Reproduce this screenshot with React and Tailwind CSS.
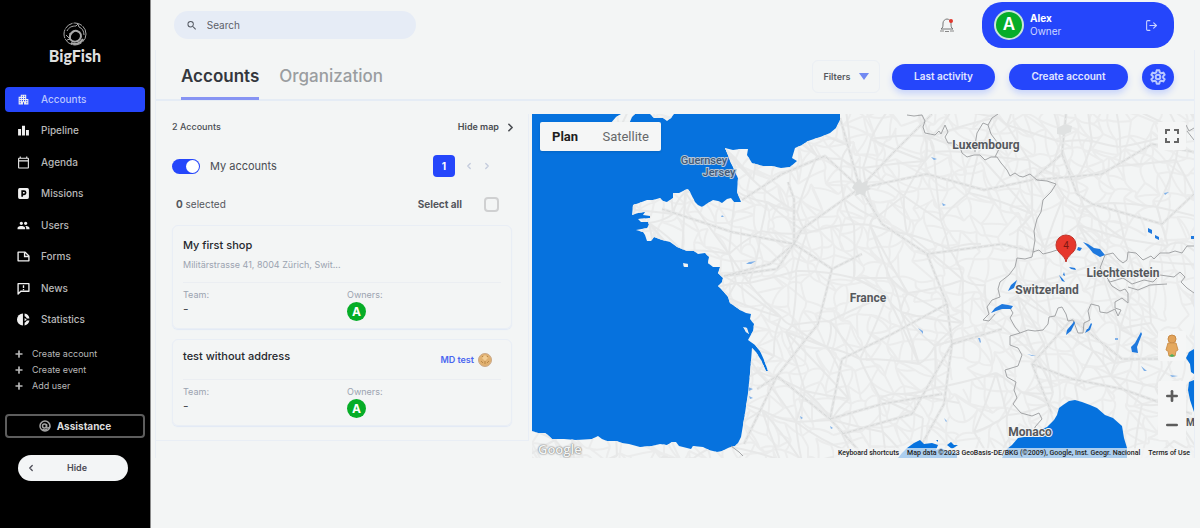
import {
  MdApartment,
  MdLeaderboard,
  MdOutlineCalendarToday,
  MdGroup,
  MdSearch,
  MdFullscreen,
} from "react-icons/md";
import { ChevronLeft, ChevronRight, LogOut, Plus, Minus } from "lucide-react";

const navItems = [
  { label: "Accounts", icon: MdApartment, active: true },
  { label: "Pipeline", icon: MdLeaderboard },
  { label: "Agenda", icon: MdOutlineCalendarToday },
  { label: "Missions", icon: MissionIcon },
  { label: "Users", icon: MdGroup },
  { label: "Forms", icon: FormIcon },
  { label: "News", icon: NewsIcon },
  { label: "Statistics", icon: StatsIcon },
];

const quickLinks = ["Create account", "Create event", "Add user"];

const accounts = [
  { name: "My first shop", address: "Militärstrasse 41, 8004 Zürich, Swit..." },
  { name: "test without address", tag: "MD test" },
];

const LAND =
  "M308 0 L308 6 304 14 298 19 291 22 276 27 270 31 263 34 260 44 265 47 258 53 249 54 240 52 231 52 220 49 215 41 216 35 208 35 201 36 193 34 196 41 198 47 201 53 206 64 205 78 209 88 202 88 199 84 195 85 190 89 186 87 181 86 176 89 170 93 166 91 163 88 158 78 156 75 153 76 147 79 141 79 141 84 138 86 135 88 131 87 128 84 121 86 115 86 107 89 101 91 100 101 106 99 113 98 111 101 118 102 118 104 106 105 109 108 116 108 117 111 115 114 104 116 111 118 113 121 115 127 119 127 122 123 130 126 138 128 145 133 155 137 162 137 166 140 173 139 177 143 176 149 181 153 188 153 186 159 191 164 190 168 186 172 191 177 196 183 198 189 208 196 214 199 219 200 218 205 222 210 221 217 216 226 223 231 228 237 232 246 236 257 234 257 229 246 224 238 220 234 218 259 216 279 213 299 209 323 206 329 203 332 196 334 190 337 185 338 177 336 171 333 161 332 159 335 155 334 147 332 144 328 140 328 135 331 128 330 120 332 108 333 97 330 90 329 85 327 75 327 70 325 66 322 60 325 44 326 32 325 20 325 16 321 13 319 6 319 0 317 V344 H662 V0 Z M78 10 L84 3 89 0 103 0 100 3 97 10 Z M118 0 H142 L139 4 135 7 131 4 122 4 Z M151 149 l5 1 0 3 -4 0 Z M211 213 l4 1 2 6 -3 -2 Z";

const LAKES =
  "M551 128 L556 130 562 134 568 135 573 141 568 143 561 139 557 134 Z M546 133 l4 1 -2 3 -3 -1Z M459 199 L463 194 470 190 476 191 481 192 479 195 470 195 464 197 Z M476 177 L479 171 485 166 482 174 Z M534 221 L535 216 541 209 542 207 543 209 539 217 Z M553 219 l2-4 1 0 3-6 1 1 -2 6 Z M600 238 L599 233 603 229 609 218 610 220 605 233 606 239 Z M537 153 l6 1 1 2 -5-1Z M527 161 l3 3 3 4 -3-1Z M532 158 l1 4 -2-1Z M616 114 l4 2 0 4 -4-2Z M623 121 l4 2 0 3 -4-2Z M659 122 h3 v3 h-3Z";

const PONDS =
  "M632 79 l5-1 -4 3Z M399 43 l6 2 -3 1Z M410 89 l4 2 -3 1Z M446 224 l2 5 1-1 -1-4Z M386 214 l5 6 0-3Z M412 304 l2 4 1-1Z M268 302 l3 2 -2 1Z M298 312 l3 2 -2 1Z M217 148 l7-1 -5 3 -5 0Z M190 101 l2 2 -3 0Z M609 252 l6 5 -3 0Z M583 224 h3 v2 h-3Z M495 240 l9 2 -4 0Z M638 261 l8 1 -6 1Z M216 273 l5 2 -4 2Z M217 282 l4 2 -3 1Z";

const SEA =
  "M475 335 L480 331 486 324 498 322 506 317 515 313 522 306 525 301 527 294 531 291 537 287 543 286 550 288 558 291 565 294 573 301 581 304 590 312 592 324 595 334 595 344 470 344 Z M370 339 L375 334 382 329 388 326 392 330 400 329 406 331 404 336 409 334 415 337 425 339 425 344 366 344 Z M415 331 l4-3 3 3 4 0 -6 4Z M404 326 l2 0 0 2Z M662 235 L657 238 654 244 658 250 659 258 662 260 Z M662 266 L657 268 656 276 658 286 662 298 Z";

const BORDERS = [
  "M375 1 L382 2 390 1 393 7 391 13 393 19 403 21 407 17 409 20 413 11 416 18 413 23 416 29 422 29 428 33 430 39 435 43 442 41 448 41 453 46 459 43 465 43 469 49 475 56 478 62 483 59 487 62 491 63 498 60 505 66 515 67 524 70 519 78 511 86 509 98 505 105 502 117 503 126 501 138",
  "M443 38 L443 31 445 19 451 9 456 11 460 4 466 0 M456 11 L459 20 465 28 468 33 463 43",
  "M501 138 L500 143 493 145 485 144 483 153 477 161 468 168 466 175 468 183 460 186 455 193 457 200 451 206 457 207 463 200 M478 194 L481 199 478 204 483 213 488 219 496 216 503 217 511 216 516 210 517 203 523 202 526 194 530 193 534 200 536 207 541 206 546 219 551 219 552 209 558 206 556 197 559 190 567 192 568 198 575 199 583 195 586 202 589 196 583 194 583 188 590 184 596 189 596 179 593 175 588 177 580 172 576 166",
  "M501 138 L507 136 511 140 519 138 528 135 M573 141 L581 139 586 145 591 149 595 146 596 138 604 139 611 146 619 142 622 145 628 139 637 139 643 137 650 139 655 132 662 132",
  "M573 141 L568 154 573 161 578 168 591 164 600 170 612 166 621 168 628 161 642 163 648 158 653 163 649 168 655 174 662 179 M596 173 L606 176 618 171 635 170",
  "M488 219 L478 222 478 231 486 234 490 241 486 252 473 256 475 263 484 268 482 276 485 284 481 290 489 299 500 302 507 299 510 305 503 313 502 319",
  "M649 10 L651 15 654 11 657 17 662 14 M655 17 L662 26 M199 332 L207 338 211 342",
];

const MOTORWAYS =
  "M328 74 L293 42 250 60 210 86 M328 74 L308 4 M328 74 L360 40 400 0 M328 74 L395 60 452 76 500 66 530 40 M328 74 L350 110 395 140 415 190 420 230 M328 74 L270 115 262 130 200 118 130 95 M262 130 L262 85 256 68 M262 130 L238 150 192 162 M262 130 L300 155 330 140 M300 155 L286 210 245 262 225 275 M420 230 L380 300 310 320 M420 230 L412 290 390 330 M420 230 L470 215 M245 262 L298 305 330 340 M245 262 L212 330 M298 305 L350 290 410 280 M415 190 L360 220 310 245 298 305 M503 66 L570 60 620 30 662 38 M530 40 L534 0 M530 40 L545 80 560 90 630 110 662 80 M540 205 L500 250 540 265 590 275 660 300 M540 205 L590 245 655 245 M500 250 L520 300 M503 138 L470 130 395 140 M192 162 L245 155 262 130";

// Small seeded generator so the road mesh is the same on every render
function buildRoads(step, jitter, seedStart) {
  let seed = seedStart;
  const rand = () => {
    seed = (seed * 16807) % 2147483647;
    return seed / 2147483647;
  };
  const cols = Math.ceil(662 / step) + 2;
  const rows = Math.ceil(344 / step) + 2;
  const point = [];
  for (let r = 0; r < rows; r++) {
    point.push([]);
    for (let c = 0; c < cols; c++) {
      point[r].push([
        Math.round((c - 0.5) * step + (rand() - 0.5) * jitter),
        Math.round((r - 0.5) * step + (rand() - 0.5) * jitter),
      ]);
    }
  }
  let d = "";
  const link = (a, b) => {
    const mx = Math.round((a[0] + b[0]) / 2 + (rand() - 0.5) * 9);
    const my = Math.round((a[1] + b[1]) / 2 + (rand() - 0.5) * 9);
    d += `M${a[0]} ${a[1]}Q${mx} ${my} ${b[0]} ${b[1]}`;
  };
  for (let r = 0; r < rows - 1; r++) {
    for (let c = 0; c < cols - 1; c++) {
      if (rand() > 0.15) link(point[r][c], point[r][c + 1]);
      if (rand() > 0.15) link(point[r][c], point[r + 1][c]);
      if (rand() > 0.6) link(point[r][c], point[r + 1][c + 1]);
    }
  }
  return d;
}

const MINOR_ROADS = buildRoads(14, 15, 4211);
const MAIN_ROADS = buildRoads(36, 34, 977);

function MissionIcon({ className }) {
  return (
    <svg viewBox="0 0 24 24" fill="currentColor" className={className}>
      <path
        fillRule="evenodd"
        d="M5 2h14a3 3 0 0 1 3 3v14a3 3 0 0 1-3 3H5a3 3 0 0 1-3-3V5a3 3 0 0 1 3-3Zm3 4v12h3v-3h2a4.500 4.500 0 0 0 0-9Zm3 3h2a1.500 1.500 0 0 1 0 3h-2Z"
      />
    </svg>
  );
}

function FormIcon({ className }) {
  return (
    <svg viewBox="0 0 24 24" fill="none" stroke="currentColor" strokeWidth="2.500" className={className}>
      <path d="M2 4h13l7 7v9H2Z" strokeLinejoin="round" />
      <path d="M14 4v8h8" />
    </svg>
  );
}

function NewsIcon({ className }) {
  return (
    <svg viewBox="0 0 24 24" fill="none" stroke="currentColor" strokeWidth="2.500" className={className}>
      <path d="M2 22V3h20v14H7Z" strokeLinejoin="round" />
      <path d="M12 6v5M12 13v2" />
    </svg>
  );
}

function StatsIcon({ className }) {
  return (
    <svg viewBox="0 0 24 24" fill="currentColor" className={className}>
      <path d="M11 1v22A11 11 0 0 1 11 1Z" />
      <path d="M14 1a11 11 0 0 1 9 9h-5a6 6 0 0 0-4-4Z" />
      <path d="M14 23a11 11 0 0 0 9-9h-5a6 6 0 0 1-4 4Z" />
      <path d="M14 9l4 3-4 3Z" />
    </svg>
  );
}

function FishLogo() {
  return (
    <svg viewBox="0 0 24 24" fill="none" stroke="#a9a9a9" className="size-6">
      <circle cx="12" cy="12" r="11" strokeWidth="1" strokeDasharray="9 1" />
      <path d="M4 9c2-4 5-5 9-5l2-2 1 3c3 1 5 4 5 8" strokeWidth="1" />
      <path d="M7 17c-1-5 3-9 7-8s5 5 3 8c-2 3-7 4-10 0Z" strokeWidth="2" />
      <path d="M3 13l4 4-3 1M6 12c3 0 4-2 6-3" strokeWidth="1" />
      <path d="M8 21c4 2 9 1 12-4" strokeWidth="2" />
    </svg>
  );
}

function HeadsetIcon() {
  return (
    <svg viewBox="0 0 24 24" fill="none" stroke="currentColor" strokeWidth="3" className="size-3 text-[#a5a5a5]">
      <circle cx="12" cy="12" r="10" />
      <circle cx="11" cy="12" r="4" />
      <path d="M15 8v6c1 3 5 3 7-1M7 18c3 3 7 2 9 0" />
    </svg>
  );
}

function GearIcon() {
  return (
    <svg viewBox="0 0 24 24" fill="none" stroke="currentColor" strokeWidth="3" strokeLinejoin="round" className="size-4">
      <path d="M10 2h4l.6 3 2.400 1.400 3-1 2 3.400-2.300 2v2.400l2.300 2-2 3.400-3-1-2.400 1.400-.6 3h-4l-.6-3L7 17.600l-3 1-2-3.400 2.300-2v-2.400L2 8.800l2-3.400 3 1L9.400 5Z" />
      <circle cx="12" cy="12" r="3.500" />
    </svg>
  );
}

function BellIcon() {
  return (
    <svg viewBox="0 0 16 16" fill="none" className="size-4">
      <path d="M2 12c2-1 2-3 2-6 0-2 2-4 4-4s4 2 4 4c0 3 0 5 2 6Z" stroke="#777" />
      <path d="M1 14h4M6 14.500h4M11 14h4" stroke="#888" />
      <circle cx="12" cy="4" r="2" fill="#e0382d" />
    </svg>
  );
}

function CookieIcon() {
  return (
    <svg viewBox="0 0 14 14" className="size-[14px]">
      <circle cx="7" cy="7" r="6.500" fill="#e0b070" stroke="#c9a98a" />
      <path d="M7 2l3 3-3 3-3-3Z" fill="#f2cd94" />
      <path d="M3 8l2 2M11 8l-2 2M7 8v3M4 4l1-1M9 3l1 1" stroke="#b88748" />
    </svg>
  );
}

function Avatar() {
  return (
    <span className="flex size-[19px] items-center justify-center rounded-full bg-[#06ad27] text-[12px] font-bold text-white">
      A
    </span>
  );
}

function Sidebar() {
  return (
    <aside className="flex w-[151px] shrink-0 flex-col border-r border-[#8b8b8b] bg-black px-[5px] text-[#b9b9b9]">
      <div className="flex flex-col items-center pt-[22px]">
        <FishLogo />
        <span className="font-[Lato] text-[16px] leading-5 font-black text-[#dedede]">BigFish</span>
      </div>

      <nav className="mt-[21px] flex h-[245px] flex-col justify-between">
        {navItems.map(({ label, icon: Icon, active }) => (
          <a
            key={label}
            href="#"
            className={`flex h-[25px] items-center gap-[11px] rounded pl-3 text-[10px] font-medium ${
              active ? "bg-[#2546fb] text-[#b9c5ff]" : ""
            }`}
          >
            <Icon className="size-[13px] text-[#f0f0f0]" />
            {label}
          </a>
        ))}
      </nav>

      <ul className="mt-[14px] pl-[9px]">
        {quickLinks.map((label) => (
          <li key={label}>
            <a href="#" className="flex h-4 items-center gap-2 text-[9px]">
              <Plus className="size-[10px]" strokeWidth={4} />
              {label}
            </a>
          </li>
        ))}
      </ul>

      <button className="mt-5 flex h-6 items-center justify-center gap-[6px] rounded border-2 border-[#5d5d5d] text-[10px] font-bold text-[#dcdcdc]">
        <HeadsetIcon />
        Assistance
      </button>
      <button className="mr-[17px] ml-[13px] mt-[17px] grid h-[26px] grid-cols-[12px_1fr_4px] items-center rounded-full bg-[#f3f5f6] px-2 text-[9px] font-semibold text-[#4b4b55]">
        <ChevronLeft className="size-[10px]" strokeWidth={3} />
        <span>Hide</span>
      </button>
    </aside>
  );
}

function TopBar() {
  return (
    <header className="flex h-[50px] items-center pr-[26px] pl-[23px]">
      <label className="flex h-7 w-[242px] items-center gap-[9px] rounded-full bg-[#e6ecf6] px-3">
        <MdSearch className="size-[13px] text-[#555a63]" />
        <input
          type="search"
          placeholder="Search"
          aria-label="Search"
          className="w-full bg-transparent text-[10px] text-[#5c6068] outline-none placeholder:text-[#5c6068]"
        />
      </label>
      <button aria-label="Notifications" className="mr-[27px] ml-auto">
        <BellIcon />
      </button>
      <div className="flex h-[46px] w-[192px] items-center rounded-[20px] bg-[#2546fb] px-3 text-white">
        <span className="flex size-[30px] items-center justify-center rounded-full border-2 border-[#c9e6d8] bg-[#06ad27] text-[17px] font-semibold">
          A
        </span>
        <div className="ml-[6px] text-[10px] leading-[13px]">
          <p className="font-bold">Alex</p>
          <p className="text-[#cfd6ff]">Owner</p>
        </div>
        <button aria-label="Log out" className="ml-auto pr-1">
          <LogOut className="size-[13px] text-[#c9d2ff]" />
        </button>
      </div>
    </header>
  );
}

function PageHeader() {
  return (
    <div className="flex h-[51px] items-center border-b-2 border-[#e5ecf5] pr-5 pl-[25px]">
      <div className="flex gap-[20px] self-stretch text-[17px]">
        <a href="#" className="-mb-px border-b-3 border-[#8794f3] pt-[14px] font-semibold text-[#33373d]">
          Accounts
        </a>
        <a href="#" className="pt-[14px] font-medium text-[#9a9da0]">
          Organization
        </a>
      </div>
      <div className="ml-auto flex items-center pt-1 text-[10px] font-semibold">
        <button className="mr-3 flex h-[33px] w-[68px] items-center justify-center gap-2 rounded-md border border-[#ebeff4] text-[9px] text-[#55585e]">
          Filters
          <svg viewBox="0 0 10 7" className="h-[7px] w-[10px]">
            <path d="M0 0h10L5 7Z" fill="#7189f2" />
          </svg>
        </button>
        <button className="mr-[14px] h-[26px] w-[103px] rounded-full bg-[#2546fb] text-[#e2e7ff] shadow-[0_4px_6px_#c9d5fa]">
          Last activity
        </button>
        <button className="mr-[14px] h-[26px] w-[119px] rounded-full bg-[#2546fb] text-[#e2e7ff] shadow-[0_4px_6px_#c9d5fa]">
          Create account
        </button>
        <button
          aria-label="Settings"
          className="flex h-[26px] w-[32px] items-center justify-center rounded-full bg-[#2546fb] text-[#b9c9ff] shadow-[0_4px_6px_#c9d5fa]"
        >
          <GearIcon />
        </button>
      </div>
    </div>
  );
}

function AccountCard({ account }) {
  return (
    <article className="mb-[10px] rounded-md border border-[#e9eef5] px-[10px] pb-[3px] shadow-[0_1px_1px_#e1e9f6]">
      <div className={`flex justify-between border-b border-[#ebeef2] ${account.address ? "h-[57px]" : "h-10"}`}>
        <div className={account.address ? "pt-[11px]" : "pt-2"}>
          <h3 className="text-[11px] leading-4 font-medium text-[#25282d]">{account.name}</h3>
          {account.address && (
            <p className="mt-1 text-[9px] leading-4 text-[#9ba3b0]">{account.address}</p>
          )}
        </div>
        {account.tag && (
          <div className="flex h-10 items-center gap-1 pr-[9px] text-[9px] font-semibold text-[#4a66f0]">
            {account.tag}
            <CookieIcon />
          </div>
        )}
      </div>
      <dl className="grid h-[42px] grid-cols-2 pt-[6px] text-[9px] leading-3 text-[#9ba3b0]">
        <div>
          <dt>Team:</dt>
          <dd className="text-[12px] leading-4 text-[#4a4d52]">-</dd>
        </div>
        <div className="pl-[5px]">
          <dt>Owners:</dt>
          <dd className="pt-px">
            <Avatar />
          </dd>
        </div>
      </dl>
    </article>
  );
}

function AccountList() {
  return (
    <section className="w-[373px] shrink-0 border-r border-b border-[#e9eef5] pr-4 pb-1 pl-4">
      <div className="flex h-[26px] items-center justify-between text-[9px] font-medium text-[#4a4d52]">
        <span>2 Accounts</span>
        <button className="-mr-[5px] flex items-center gap-[5px] font-semibold">
          Hide map
          <ChevronRight className="size-[13px]" strokeWidth={3} />
        </button>
      </div>

      <div className="flex h-[52px] items-center text-[10px] text-[#4a4d53]">
        <label className="flex items-center gap-[10px]">
          <input type="checkbox" defaultChecked className="peer sr-only" />
          <span className="flex h-[15px] w-[28px] justify-end rounded-full bg-[#2546fb] p-px">
            <span className="size-[13px] rounded-full bg-white" />
          </span>
          <span className="text-[11px]">My accounts</span>
        </label>
        <div className="mr-5 ml-auto flex items-center gap-2 text-[#c3cbdc]">
          <button className="mr-px size-[22px] rounded bg-[#2546fb] text-[10px] font-bold text-white">1</button>
          <button aria-label="Previous page">
            <ChevronLeft className="size-[10px]" strokeWidth={3} />
          </button>
          <button aria-label="Next page">
            <ChevronRight className="size-[10px]" strokeWidth={3} />
          </button>
        </div>
      </div>

      <div className="mb-[9px] flex h-6 items-center justify-between pr-[13px] pl-1 text-[10px] text-[#53565c]">
        <span>
          <b>0</b> selected
        </span>
        <label className="flex items-center gap-[22px] font-bold">
          Select all
          <input
            type="checkbox"
            className="size-[15px] appearance-none rounded border-2 border-[#cfd0d1]"
          />
        </label>
      </div>

      {accounts.map((account) => (
        <AccountCard key={account.name} account={account} />
      ))}
    </section>
  );
}

function MapLabel({ x, y, children }) {
  return (
    <text
      x={x}
      y={y}
      textAnchor="middle"
      className="fill-[#55585c] stroke-[#f3f5f5] stroke-2 font-[Roboto] text-[12px] font-bold [paint-order:stroke]"
    >
      {children}
    </text>
  );
}

function IslandLabel({ x, y, children }) {
  return (
    <text
      x={x}
      y={y}
      textAnchor="middle"
      className="fill-[#3f5a78] stroke-[#b5c6d8] stroke-2 font-[Roboto] text-[11px] font-medium [paint-order:stroke]"
    >
      {children}
    </text>
  );
}

function MapCanvas() {
  return (
    <svg viewBox="0 0 662 344" preserveAspectRatio="xMinYMin slice" className="size-full">
      <defs>
        <clipPath id="land">
          <path d={LAND} />
        </clipPath>
      </defs>
      <rect width="662" height="344" fill="#0672de" />
      <path d={LAND} fill="#f3f5f5" />
      <g clipPath="url(#land)" fill="none">
        <path d={MINOR_ROADS} stroke="#ebecec" strokeWidth="2" />
        <path d={MAIN_ROADS} stroke="#e7e8e8" strokeWidth="2" />
        <path d={MOTORWAYS} stroke="#e6e7e7" strokeWidth="3" strokeLinejoin="round" />
        <path d={MOTORWAYS} stroke="#d6d8d8" strokeWidth="1" strokeDasharray="4 2" />
      </g>
      <path d="M322 70l6-5 2 4 6-2-1 5 4 3-5 2-1 5-5-2-5 2 1-5-4-3Z" fill="#dcdede" />
      <path d="M525 14l8-4 7 2-1 6-8 3-6-1Z" fill="#e0e2e2" />
      {BORDERS.map((d) => (
        <path key={d} d={d} fill="none" stroke="#a3a5a7" strokeWidth="1" />
      ))}
      <path d={SEA} fill="#0672de" />
      <path d={LAKES} fill="#1f79de" />
      <path d={PONDS} fill="#7fb0e8" />

      <IslandLabel x={172} y={50}>Guernsey</IslandLabel>
      <IslandLabel x={187} y={62}>Jersey</IslandLabel>
      <MapLabel x={454} y={35}>Luxembourg</MapLabel>
      <MapLabel x={336} y={188}>France</MapLabel>
      <MapLabel x={515} y={180}>Switzerland</MapLabel>
      <MapLabel x={591} y={163}>Liechtenstein</MapLabel>
      <MapLabel x={498} y={322}>Monaco</MapLabel>

      <path
        d="M534 148 C533 141 524 139 524 131 A10 10 0 0 1 544 131 C544 139 535 141 534 148Z"
        fill="#e6372c"
        stroke="#c0342b"
      />
      <text x="534" y="135" textAnchor="middle" className="fill-[#7d1712] font-[Roboto] text-[10px]">
        4
      </text>
      <text x="654" y="312" className="fill-[#55585c] font-[Roboto] text-[10px] font-bold">
        M
      </text>
    </svg>
  );
}

function MapPanel() {
  return (
    <section className="relative h-[344px] min-w-0 flex-1 overflow-hidden font-[Roboto]">
      <MapCanvas />

      <div className="absolute top-2 left-2 flex h-[29px] w-[121px] items-center justify-between rounded-xs bg-[#f5f6f6] px-3 text-[13px] shadow-sm">
        <button className="font-bold text-[#1d1d1d]">Plan</button>
        <button className="text-[#66686a]">Satellite</button>
      </div>

      <button
        aria-label="Toggle fullscreen"
        className="absolute top-2 right-2 flex size-7 items-center justify-center rounded-xs bg-[#f5f6f6]"
      >
        <MdFullscreen className="size-6 text-[#666]" />
      </button>

      <div className="absolute right-2 bottom-[18px] flex flex-col gap-5">
        <button
          aria-label="Street View"
          className="flex h-[30px] w-7 items-center justify-center rounded-xs bg-[#f5f6f6]"
        >
          <svg viewBox="0 0 14 24" className="h-6 w-[14px]">
            <circle cx="7" cy="5" r="4" fill="#e2a35a" stroke="#c98a45" />
            <path d="M3 9h8l2 7-2 1-1 5H4l-1-5-2-1Z" fill="#e5a95f" stroke="#cf9350" />
            <path d="M4 22l3-2 3 2-3 1Z" fill="#4fae5d" />
          </svg>
        </button>
        <div className="flex h-[59px] w-7 flex-col items-center justify-around rounded-xs bg-[#f5f6f6] text-[#5c5c5c]">
          <button aria-label="Zoom in">
            <Plus className="size-4" strokeWidth={4} />
          </button>
          <button aria-label="Zoom out">
            <Minus className="size-4" strokeWidth={4} />
          </button>
        </div>
      </div>

      <span className="absolute bottom-px left-[6px] font-['Open_Sans'] text-[13px] leading-4 font-semibold text-[#f3f5f5] [text-shadow:0_0_2px_#777,0_0_1px_#777]">
        Google
      </span>

      <div className="absolute right-0 bottom-0 flex h-[10px] items-center gap-2 bg-[#f3f5f5]/70 px-1 text-[7px] font-medium whitespace-nowrap text-[#222]">
        <button>Keyboard shortcuts</button>
        <span>Map data ©2023 GeoBasis-DE/BKG (©2009), Google, Inst. Geogr. Nacional</span>
        <a href="#">Terms of Use</a>
      </div>
    </section>
  );
}

export default function App() {
  return (
    <div className="flex min-h-screen bg-[#f3f5f5] font-[Inter,sans-serif]">
      <Sidebar />
      <div className="min-w-0 flex-1">
        <TopBar />
        <main className="mr-[5px] ml-1 border-x border-[#e9eef5]">
          <PageHeader />
          <div className="flex items-start gap-[3px] pt-[13px]">
            <AccountList />
            <MapPanel />
          </div>
        </main>
      </div>
    </div>
  );
}
